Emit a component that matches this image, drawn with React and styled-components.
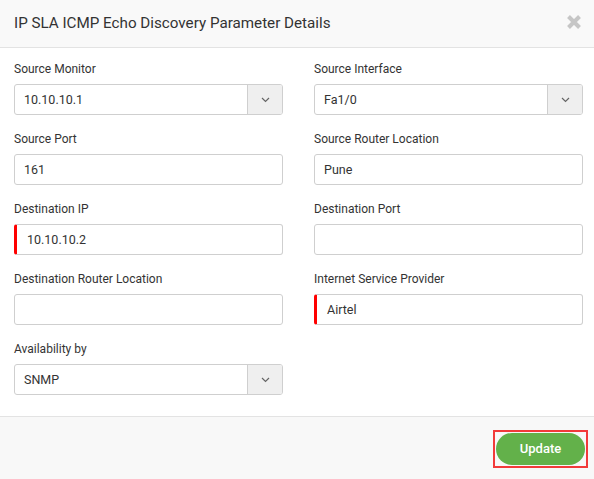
import React from "react";
import styled, { createGlobalStyle } from "styled-components";

const Global = createGlobalStyle`
  html, body { margin: 0; padding: 0; background: #fff; }
  body { font-family: Roboto, "Noto Sans", sans-serif; color: #333; }
  * { box-sizing: border-box; }
`;

const Dialog = styled.div`
  width: 594px;
  height: 479px;
  display: flex;
  flex-direction: column;
  background: #fff;
`;

const Header = styled.div`
  height: 48px;
  flex: none;
  display: flex;
  align-items: center;
  justify-content: space-between;
  padding: 0 12px 0 14px;
  background: #f9f9f9;
  border-bottom: 1px solid #e3e3e3;
`;

const Title = styled.h1`
  margin: 0;
  font-size: 15.2px;
  font-weight: 400;
  color: #333;
  line-height: 20px;
  padding-bottom: 2px;
`;

const Close = styled.button`
  border: 0;
  background: transparent;
  padding: 0;
  width: 16px;
  height: 16px;
  display: flex;
  margin-top: -3px;
`;

const Body = styled.div`
  flex: 1;
  display: grid;
  grid-template-columns: 269px 269px;
  column-gap: 31px;
  row-gap: 16px;
  align-content: start;
  padding: 13px 11px 0 14px;
`;

const Field = styled.div`
  display: flex;
  flex-direction: column;
`;

const Label = styled.label`
  font-size: 12px;
  line-height: 16px;
  height: 16px;
  color: #333;
  margin-bottom: 7px;
`;

const InputBox = styled.div`
  height: 31px;
  display: flex;
  align-items: stretch;
  border: 1px solid #cfcfcf;
  border-radius: 3px;
  background: #fff;
  overflow: hidden;
  ${(p) => p.$required && `border-left: 3px solid #ff0000;`}
`;

const Value = styled.span`
  flex: 1;
  display: flex;
  align-items: center;
  padding-left: ${(p) => (p.$required ? "10px" : "9px")};
  font-size: 12.5px;
  color: #333;
`;

const Caret = styled.span`
  width: 35px;
  flex: none;
  display: flex;
  align-items: center;
  justify-content: center;
  background: #efefef;
  border-left: 1px solid #cfcfcf;
`;

const Footer = styled.div`
  height: 63px;
  flex: none;
  display: flex;
  align-items: center;
  justify-content: flex-end;
  padding: 1px 6px 0 0;
  background: #f8f8f8;
  border-top: 1px solid #e3e3e3;
`;

const Highlight = styled.span`
  display: flex;
  padding: 1px;
  border: 2px solid #f23a3a;
`;

const UpdateButton = styled.button`
  width: 89px;
  height: 32px;
  border: 0;
  border-radius: 16px;
  background: #63b14a;
  color: #fff;
  font-family: Roboto, "Noto Sans", sans-serif;
  font-size: 13px;
  font-weight: 500;
`;

const Chevron = () => (
  <svg width="9" height="6" viewBox="0 0 9 6">
    <path d="M1 1l3.5 3.5L8 1" fill="none" stroke="#666" strokeWidth="1.2" />
  </svg>
);

const CloseIcon = () => (
  <svg width="16" height="16" viewBox="0 0 16 16">
    <path d="M2.5 2.5l11 11M13.5 2.5l-11 11" stroke="#c6c6c6" strokeWidth="4" strokeLinecap="butt" />
  </svg>
);

const fields = [
  { label: "Source Monitor", value: "10.10.10.1", select: true },
  { label: "Source Interface", value: "Fa1/0", select: true },
  { label: "Source Port", value: "161" },
  { label: "Source Router Location", value: "Pune" },
  { label: "Destination IP", value: "10.10.10.2", required: true },
  { label: "Destination Port", value: "" },
  { label: "Destination Router Location", value: "" },
  { label: "Internet Service Provider", value: "Airtel", required: true },
  { label: "Availability by", value: "SNMP", select: true },
];

export default function App() {
  return (
    <>
      <Global />
      <Dialog>
        <Header>
          <Title>IP SLA ICMP Echo Discovery Parameter Details</Title>
          <Close aria-label="Close">
            <CloseIcon />
          </Close>
        </Header>
        <Body>
          {fields.map((f) => (
            <Field key={f.label}>
              <Label>{f.label}</Label>
              <InputBox $required={f.required}>
                <Value $required={f.required}>{f.value}</Value>
                {f.select && (
                  <Caret>
                    <Chevron />
                  </Caret>
                )}
              </InputBox>
            </Field>
          ))}
        </Body>
        <Footer>
          <Highlight>
            <UpdateButton>Update</UpdateButton>
          </Highlight>
        </Footer>
      </Dialog>
    </>
  );
}
